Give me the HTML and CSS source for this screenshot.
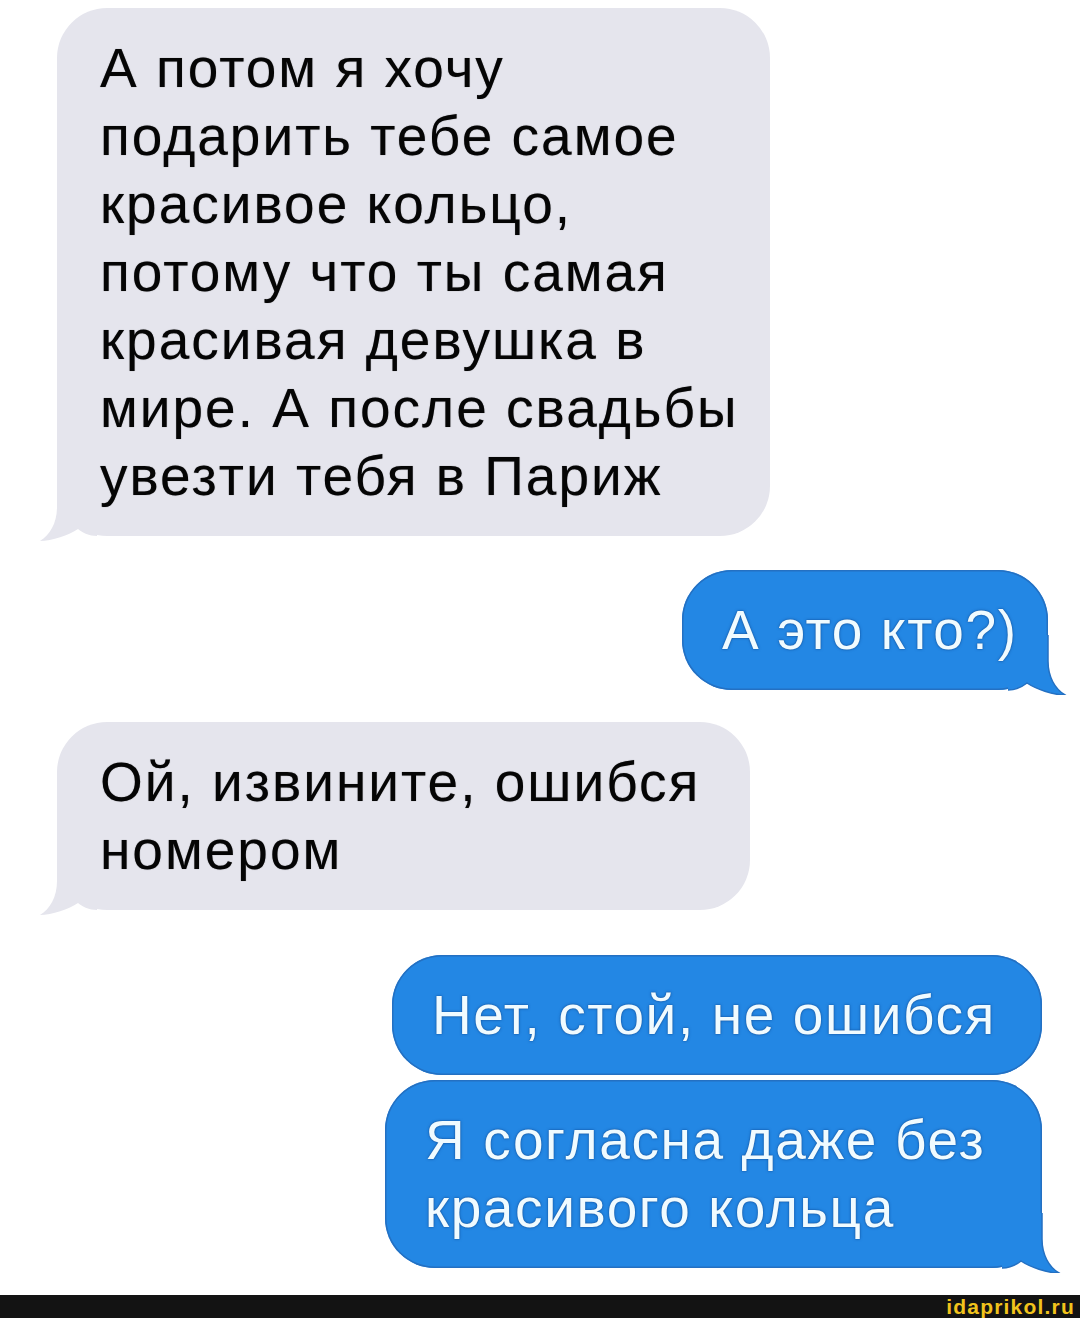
FILE: index.html
```html
<!DOCTYPE html>
<html lang="ru">
<head>
<meta charset="utf-8">
<title>Переписка</title>
<link rel="stylesheet" href="styles.css">
</head>
<body>
<div class="screen">
  <div class="thread">
    <div class="bubble in b1"><svg class="tail tail-in" viewBox="0 0 60 60" width="60" height="60"><path d="M60 0H20V26C20 42 13 54 3 60C15 60 32 54 41 48C46 52 52 55 60 55Z"/></svg><span class="text">А потом я хочу<br>подарить тебе самое<br>красивое кольцо,<br>потому что ты самая<br>красивая девушка в<br>мире. А после свадьбы<br>увезти тебя в Париж</span></div>
    <div class="bubble out b2"><svg class="tail tail-out" viewBox="0 0 60 60" width="60" height="60"><path class="fill" d="M0 0H40V26C40 42 47 54 57 60C45 60 28 54 19 48C14 52 8 55 0 55Z"/><path class="edge" d="M40 0V26C40 42 47 54 57 60C45 60 28 54 19 48C14 52 8 55 0 55"/></svg><span class="text">А это кто?)</span></div>
    <div class="bubble in b3"><svg class="tail tail-in" viewBox="0 0 60 60" width="60" height="60"><path d="M60 0H20V26C20 42 13 54 3 60C15 60 32 54 41 48C46 52 52 55 60 55Z"/></svg><span class="text">Ой, извините, ошибся<br>номером</span></div>
    <div class="bubble out b4"><span class="text">Нет, стой, не ошибся</span></div>
    <div class="bubble out b5"><svg class="tail tail-out" viewBox="0 0 60 60" width="60" height="60"><path class="fill" d="M0 0H40V26C40 42 47 54 57 60C45 60 28 54 19 48C14 52 8 55 0 55Z"/><path class="edge" d="M40 0V26C40 42 47 54 57 60C45 60 28 54 19 48C14 52 8 55 0 55"/></svg><span class="text">Я согласна даже без<br>красивого кольца</span></div>
  </div>
  <div class="footer"><span class="mark">idaprikol.ru</span></div>
</div>
</body>
</html>
```
FILE: styles.css
```css
html, body {
  margin: 0;
  padding: 0;
  background: #ffffff;
}

.screen {
  width: 1080px;
  height: 1318px;
  display: flex;
  flex-direction: column;
  overflow: hidden;
}

.thread {
  flex: 1;
  display: flex;
  flex-direction: column;
  padding-top: 8px;
}

.bubble {
  position: relative;
  box-sizing: border-box;
  font-family: "Liberation Sans", Arial, sans-serif;
  font-size: 55px;
  line-height: 68px;
  padding: 26px 0 26px 43px;
  border-radius: 50px;
  white-space: nowrap;
}

.text {
  position: relative;
}

.bubble.in {
  align-self: flex-start;
  margin-left: 57px;
  background: #e5e5ed;
  color: #050505;
  letter-spacing: 2px;
  text-shadow: 0 0 1px rgba(0, 0, 0, 0.45);
}

.bubble.out {
  align-self: flex-end;
  background: #2387e4;
  color: #f0fbff;
  letter-spacing: 1.6px;
  box-shadow: inset 0 0 0 1.5px #2470c2;
  text-shadow: 0 0 1px #0f4a94, 0 0 3px rgba(10, 55, 120, 0.6);
  padding-left: 40px;
}

.b1 { width: 713px; }
.b2 { width: 366px; margin-top: 34px; margin-right: 32px; padding-left: 38px; letter-spacing: 0.6px; }
.b3 { width: 693px; margin-top: 32px; }
.b4 { width: 650px; margin-top: 45px; margin-right: 38px; }
.b5 { width: 657px; margin-top: 5px; margin-right: 38px; }

.tail {
  position: absolute;
  bottom: -5px;
}

.tail-in {
  left: -20px;
  fill: #e5e5ed;
}

.tail-out {
  right: -20px;
}

.tail-out .fill {
  fill: #2387e4;
}

.tail-out .edge {
  fill: none;
  stroke: #2470c2;
  stroke-width: 1.5;
}

.footer {
  height: 23px;
  background: #131313;
  display: flex;
  justify-content: flex-end;
  align-items: center;
  padding-right: 5px;
}

.mark {
  font-family: "Liberation Sans", Arial, sans-serif;
  font-weight: 700;
  font-size: 21px;
  line-height: 23px;
  letter-spacing: 1.2px;
  color: #f1c31c;
}
```
